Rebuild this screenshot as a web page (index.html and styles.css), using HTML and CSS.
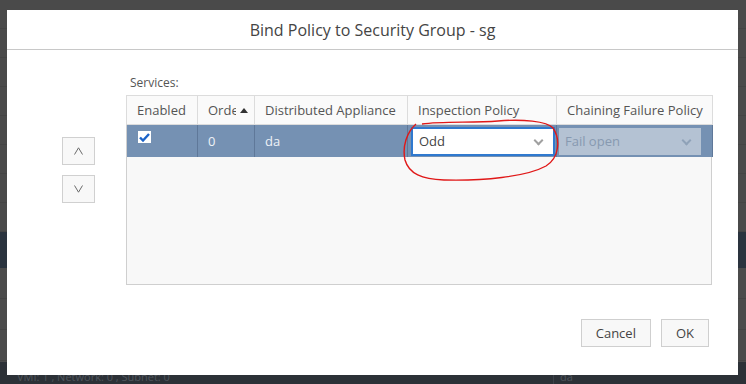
FILE: index.html
```html
<!DOCTYPE html>
<html lang="en">
<head>
    <meta charset="UTF-8">
    <title>Bind Policy to Security Group</title>
    <link rel="stylesheet" href="styles.css">
</head>
<body>
    <div class="backdrop">
        <div class="band band-top"></div>
        <div class="band band-dark"></div>
        <div class="band band-mid"></div>
        <div class="band band-bottom">
            <span class="bg-cell bg-first">VMI: 1 , Network: 0 , Subnet: 0</span>
            <span class="bg-cell bg-second">da</span>
        </div>
    </div>

    <div class="modal">
        <div class="modal-header">Bind Policy to Security Group - sg</div>

        <div class="modal-body">
            <div class="order-btns">
                <button class="arrow-btn" title="Move up">
                    <svg width="9" height="8" viewBox="0 0 9 8"><path d="M0.5 7.5 L4.5 0.8 L8.5 7.5" fill="none" stroke="#6a6a6a" stroke-width="1"/></svg>
                </button>
                <button class="arrow-btn" title="Move down">
                    <svg width="9" height="8" viewBox="0 0 9 8"><path d="M0.5 0.5 L4.5 7.2 L8.5 0.5" fill="none" stroke="#6a6a6a" stroke-width="1"/></svg>
                </button>
            </div>

            <div class="services">
                <div class="services-label">Services:</div>
                <div class="grid">
                    <table>
                        <colgroup>
                            <col style="width:71px">
                            <col style="width:57px">
                            <col style="width:153px">
                            <col style="width:149px">
                            <col style="width:156px">
                        </colgroup>
                        <thead>
                            <tr>
                                <th>Enabled</th>
                                <th class="sorted"><span class="clip">Order</span><span class="sort-arrow"></span></th>
                                <th>Distributed Appliance</th>
                                <th>Inspection Policy</th>
                                <th>Chaining Failure Policy</th>
                            </tr>
                        </thead>
                        <tbody>
                            <tr class="selected">
                                <td><span class="check">
                                    <svg width="11" height="9" viewBox="0 0 11 9"><path d="M1 4.5 L4 7.5 L10 1" fill="none" stroke="#1a63c9" stroke-width="2.4"/></svg>
                                </span></td>
                                <td>0</td>
                                <td>da</td>
                                <td class="cell-select">
                                    <div class="select focused">Odd<span class="chev"></span></div>
                                </td>
                                <td class="cell-select">
                                    <div class="select disabled">Fail open<span class="chev"></span></div>
                                </td>
                            </tr>
                        </tbody>
                    </table>
                </div>
            </div>
        </div>

        <div class="modal-footer">
            <button class="btn">Cancel</button>
            <button class="btn">OK</button>
        </div>

        <!-- hand drawn highlight -->
        <svg class="scribble" width="170" height="74" viewBox="0 0 170 74">
            <path d="M16 8 C 7 16, 2 30, 5 44 C 9 58, 22 63, 44 64 C 82 65, 126 61, 146 50 C 159 42, 161 24, 153 12 C 147 5, 122 3, 98 5 C 72 7, 42 5, 22 8"
                  fill="none" stroke="#e01818" stroke-width="1.4"/>
        </svg>
    </div>
</body>
</html>
```

FILE: styles.css
```css
body {
    margin: 0;
    width: 746px;
    height: 384px;
    overflow: hidden;
    position: relative;
    font-family: "Open Sans", Arial, sans-serif;
    background-color: #4a4a4a;
    color: #333;
}

.backdrop {
    display: flex;
    flex-direction: column;
    height: 384px;
}

.band-top {
    height: 232px;
    background: repeating-linear-gradient(to bottom, #4a4a4a 0, #4a4a4a 28px, #444 28px, #444 29px);
}

.band-dark {
    height: 36px;
    background-color: #2a333e;
}

.band-mid {
    height: 94px;
    background: repeating-linear-gradient(to bottom, #4b4b4b 0, #4b4b4b 30px, #444 30px, #444 31px);
}

.band-bottom {
    flex: 1;
    background-color: #2c3137;
    display: flex;
    align-items: flex-end;
    font-size: 11px;
    color: #4f555c;
}

.bg-cell {
    padding: 0 0 0 17px;
    line-height: 14px;
}

.bg-first {
    width: 536px;
    border-right: 1px solid #3c4249;
}

.bg-second {
    padding-left: 6px;
}

.modal {
    position: absolute;
    left: 7px;
    top: 10px;
    width: 731px;
    height: 365px;
    background-color: #fff;
    display: flex;
    flex-direction: column;
}

.modal-header {
    height: 39px;
    border-bottom: 1px solid #c8c8c8;
    text-align: center;
    font-size: 16px;
    line-height: 40px;
    color: #444;
}

.modal-body {
    display: flex;
    padding: 0 0 0 55px;
    gap: 31px;
}

.order-btns {
    display: flex;
    flex-direction: column;
    gap: 10px;
    padding-top: 87px;
}

.arrow-btn {
    width: 33px;
    height: 28px;
    background-color: #f8f8f8;
    border: 1px solid #d0d0d0;
    padding: 0;
    display: flex;
    align-items: center;
    justify-content: center;
}

.services-label {
    font-size: 12px;
    color: #555;
    padding: 24px 0 0 4px;
    line-height: 17px;
    height: 21px;
}

.grid {
    width: 584px;
    height: 188px;
    border: 1px solid #cfcfcf;
    background-color: #f8f8f8;
}

table {
    border-collapse: collapse;
    table-layout: fixed;
    width: 586px;
    margin: -1px 0 0 -1px;
    font-size: 13px;
}

th {
    height: 28px;
    padding: 0 0 0 10px;
    text-align: left;
    font-weight: normal;
    color: #555;
    background-color: #fafafa;
    border: 1px solid #dcdcdc;
    white-space: nowrap;
    overflow: hidden;
}

th.sorted {
    position: relative;
}

.clip {
    display: inline-block;
    width: 28px;
    overflow: hidden;
    vertical-align: top;
}

.sort-arrow {
    position: absolute;
    top: 12px;
    left: 42px;
    border-left: 4px solid transparent;
    border-right: 4px solid transparent;
    border-bottom: 5px solid #333;
}

td {
    height: 32px;
    padding: 0 0 0 10px;
    border-right: 1px solid #5f7899;
    white-space: nowrap;
}

tr.selected td {
    background-color: #7591b3;
    color: #eef2f7;
}

td:first-child {
    padding-left: 11px;
}

.check {
    display: inline-block;
    width: 13px;
    height: 12px;
    background-color: #fff;
    position: relative;
    top: -3px;
}

.check svg {
    position: absolute;
    left: 1px;
    top: 2px;
}

td.cell-select {
    padding: 0 0 0 3px;
}

.select {
    position: relative;
    height: 25px;
    line-height: 25px;
    padding-left: 6px;
    font-size: 13px;
}

.select.focused {
    width: 134px;
    border: 2px solid #2f79cf;
    background-color: #fff;
    color: #444;
}

.select.disabled {
    width: 136px;
    height: 27px;
    line-height: 27px;
    margin-left: -1px;
    background-color: #b4c2d3;
    color: #8799b0;
}

.chev {
    position: absolute;
    right: 11px;
    top: 8px;
    width: 5px;
    height: 5px;
    border-right: 2px solid #a0a0a0;
    border-bottom: 2px solid #a0a0a0;
    transform: rotate(45deg);
}

.disabled .chev {
    border-color: #8fa2b8;
    top: 9px;
}

.modal-footer {
    margin-top: auto;
    display: flex;
    justify-content: flex-end;
    gap: 10px;
    padding: 0 29px 28px 0;
}

.btn {
    height: 28px;
    padding: 0 14px;
    background-color: #f8f8f8;
    border: 1px solid #cfcfcf;
    font-family: "Open Sans", Arial, sans-serif;
    font-size: 13px;
    color: #444;
}

.scribble {
    position: absolute;
    left: 393px;
    top: 106px;
}
```
